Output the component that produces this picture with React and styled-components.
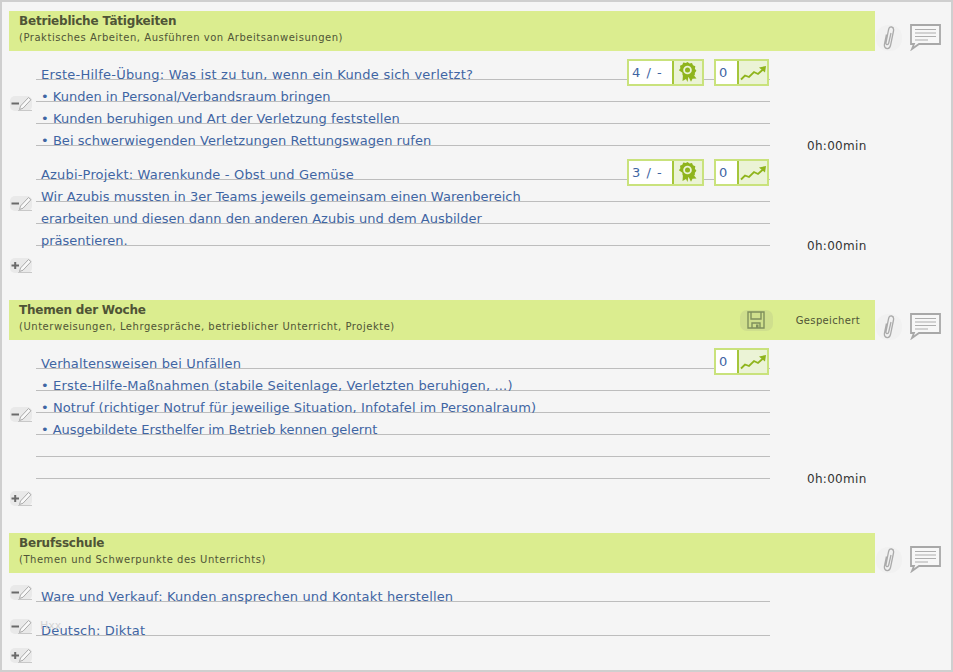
import React from 'react';
import styled, { createGlobalStyle } from 'styled-components';

const GlobalStyle = createGlobalStyle`
  html, body {
    margin: 0;
    padding: 0;
    background: #f5f5f5;
  }
  body {
    font-family: "DejaVu Sans", Verdana, sans-serif;
  }
`;

const Page = styled.div`
  box-sizing: border-box;
  width: 953px;
  height: 672px;
  overflow: hidden;
  padding: 9px 7px 0;
  border: 2px solid #cfcfcf;
  background: #f5f5f5;
`;

const Section = styled.section`
  margin-bottom: 27px;
`;

const HeaderRow = styled.div`
  display: flex;
  align-items: flex-start;
`;

const GreenBar = styled.header`
  box-sizing: border-box;
  display: flex;
  align-items: center;
  justify-content: space-between;
  width: 866px;
  height: 40px;
  padding: 0 15px 0 10px;
  background: #dbed8f;
`;

const TitleBlock = styled.div`
  align-self: flex-start;
  padding-top: 2px;
`;

const Title = styled.h2`
  margin: 0;
  font-size: 12px;
  line-height: 16px;
  font-weight: bold;
  letter-spacing: -0.2px;
  color: #4f5436;
`;

const Subtitle = styled.p`
  margin: 0;
  font-size: 10px;
  line-height: 17px;
  letter-spacing: 0.53px;
  color: #4f5436;
`;

const SaveArea = styled.div`
  display: flex;
  align-items: center;
  gap: 23px;
`;

const SaveButton = styled.div`
  display: flex;
  align-items: center;
  justify-content: center;
  width: 33px;
  height: 21px;
  border-radius: 7px;
  background: #cfdf8d;
`;

const SavedLabel = styled.span`
  font-size: 10px;
  letter-spacing: 0.35px;
  color: #4f5436;
`;

const Tools = styled.div`
  display: flex;
  align-items: center;
  gap: 8px;
  padding: 13px 0 0 1px;
`;

const ClipWrap = styled.div`
  display: flex;
  align-items: center;
  justify-content: center;
  width: 26px;
  height: 26px;
  border-radius: 12px;
  background: #f1f1f1;
`;

const Entries = styled.div`
  display: flex;
  flex-direction: column;
  gap: 12px;
  padding: 7px 0 0 1px;
`;

const EditIcon = styled.div`
  flex: none;
  width: 22px;
  height: 15px;
  border-radius: 5px;
  background: #e9e9e9;
`;

const Entry = styled.div`
  display: flex;
  align-items: center;
  gap: 4px;

  & > ${EditIcon} {
    margin-top: 3px;
  }
`;

const Lines = styled.div`
  position: relative;
  width: 734px;
`;

const Line = styled.div`
  box-sizing: border-box;
  height: 22px;
  padding: 9px 0 0 5px;
  border-bottom: 1px solid #bdbdbd;
  font-size: 13px;
  line-height: 16px;
  white-space: nowrap;
  letter-spacing: ${p => p.$track || 0}px;
  color: #3f65a3;
`;

const Badges = styled.div`
  position: absolute;
  top: 1px;
  right: 1px;
  display: flex;
  gap: 10px;
`;

const Badge = styled.div`
  box-sizing: border-box;
  display: flex;
  height: 27px;
  border: 2px solid #c9e27c;
  background: #fff;
`;

const BadgeValue = styled.span`
  box-sizing: border-box;
  width: ${p => p.$width}px;
  padding-left: 3px;
  font-size: 13px;
  line-height: 23px;
  letter-spacing: 1px;
  color: #3f65a3;
`;

const BadgeIcon = styled.span`
  display: flex;
  align-items: center;
  justify-content: center;
  width: 28px;
  border-left: 2px solid #a5c63b;
  background: #ebf3d6;
`;

const Duration = styled.div`
  align-self: flex-end;
  margin: 0 0 -8px 33px;
  font-size: 12px;
  line-height: 15px;
  letter-spacing: 0.3px;
  color: #333;
`;

const Ghost = styled.span`
  position: absolute;
  top: 7px;
  left: 4px;
  font-size: 11px;
  line-height: 10px;
  color: #d4d4d4;
`;

const EditGlyph = ({ plus }) => (
  <EditIcon>
    <svg width="22" height="15" viewBox="0 0 22 15">
      <path d="M1.500 7.500h7.500" stroke="#6a6a6a" strokeWidth="2" />
      {plus && <path d="M5.200 4v7" stroke="#6a6a6a" strokeWidth="2" />}
      <path d="M10.500 10l8-8.500 2.500 2.200-8 8.500-3.500 1.300z" fill="#f9f9f9" stroke="#aaa" />
      <path d="M8 14.500h14" stroke="#c8c8c8" />
    </svg>
  </EditIcon>
);

const Clip = () => (
  <svg width="12" height="24" viewBox="0 0 12 24" fill="none" stroke="#aaa" strokeWidth="1.300">
    <path d="M3.500 8.500L1.500 18c-.5 2.600.6 4.200 2.400 4.500 1.900.3 3.200-1 3.700-3.300L10.500 5c.4-2.200-.3-3.700-1.900-4-1.500-.2-2.700.8-3.100 2.800L3 16.500c-.2 1.200.2 2 1 2.100.8.2 1.400-.4 1.700-1.600L8 7" />
  </svg>
);

const Comment = () => (
  <svg width="31" height="27" viewBox="0 0 31 27">
    <path d="M1 1h29v19H9l-7 5 2-5H1z" fill="#f7f7f7" stroke="#a8a8a8" strokeWidth="1.800" />
    <path d="M5 5.500h21M5 9h21M5 12.500h21M5 16h13" stroke="#aeaeae" strokeWidth="1.200" />
  </svg>
);

const Floppy = () => (
  <svg width="18" height="18" viewBox="0 0 18 18" fill="none" stroke="#7f8f5c" strokeWidth="1.400">
    <path d="M1 1h16v16H1z" />
    <path d="M4 1v7h10V1M5 17v-5h8v5" />
    <path d="M9 13.500h2.500V17H9z" fill="#7f8f5c" stroke="none" />
  </svg>
);

const Rosette = () => (
  <svg width="20" height="21" viewBox="0 0 20 21">
    <path d="M5 12l-.5 7 3.500-2 1.500 3 1-6zM14 11l4.500 5.500-4 .2-1.500 3-3-6z" fill="#8fb41c" />
    <path d="M9.500 0l2 1.500 2.500-.5 1 2.300 2.300 1-.4 2.500 1.500 2-1.500 2-.1 2.400-2.400.5-1.400 2-2.400-.8-2.300.8-1.400-2-2.400-.5-.1-2.400L.9 8.300l1.500-2L2 3.800l2.300-1 1-2.300 2.500.5z" fill="#8fb41c" />
    <circle cx="9.500" cy="8" r="4.300" fill="#ebf3d6" />
    <circle cx="9.500" cy="8" r="2.500" fill="#8fb41c" />
  </svg>
);

const Trend = () => (
  <svg width="27" height="18" viewBox="0 0 27 18" fill="none">
    <path d="M1 15.500l4-4 4 1.500 5-5 4 2 5-4.500" stroke="#8fb41c" strokeWidth="1.800" />
    <path d="M19 3.500l7-1.500-1 6.500z" fill="#8fb41c" />
  </svg>
);

const sections = [
  {
    title: 'Betriebliche Tätigkeiten',
    subtitle: '(Praktisches Arbeiten, Ausführen von Arbeitsanweisungen)',
    entries: [
      {
        lines: [
          ['Erste-Hilfe-Übung: Was ist zu tun, wenn ein Kunde sich verletzt?', 0.23],
          ['• Kunden in Personal/Verbandsraum bringen', 0],
          ['• Kunden beruhigen und Art der Verletzung feststellen', 0.08],
          ['• Bei schwerwiegenden Verletzungen Rettungswagen rufen', 0.05],
        ],
        grade: '4 / -',
        count: '0',
        duration: '0h:00min',
      },
      {
        lines: [
          ['Azubi-Projekt: Warenkunde - Obst und Gemüse', 0.18],
          ['Wir Azubis mussten in 3er Teams jeweils gemeinsam einen Warenbereich', 0.03],
          ['erarbeiten und diesen dann den anderen Azubis und dem Ausbilder', 0],
          ['präsentieren.', 0],
        ],
        grade: '3 / -',
        count: '0',
        duration: '0h:00min',
      },
    ],
  },
  {
    title: 'Themen der Woche',
    subtitle: '(Unterweisungen, Lehrgespräche, betrieblicher Unterricht, Projekte)',
    saved: true,
    entries: [
      {
        lines: [
          ['Verhaltensweisen bei Unfällen', 0.14],
          ['• Erste-Hilfe-Maßnahmen (stabile Seitenlage, Verletzten beruhigen, ...)', 0.15],
          ['• Notruf (richtiger Notruf für jeweilige Situation, Infotafel im Personalraum)', 0.08],
          ['• Ausgebildete Ersthelfer im Betrieb kennen gelernt', -0.04],
          ['', 0],
          ['', 0],
        ],
        count: '0',
        duration: '0h:00min',
      },
    ],
  },
  {
    title: 'Berufsschule',
    subtitle: '(Themen und Schwerpunkte des Unterrichts)',
    entries: [
      { lines: [['Ware und Verkauf: Kunden ansprechen und Kontakt herstellen', 0.14]] },
      { lines: [['Deutsch: Diktat', 0.2]], ghost: 'Hxx' },
    ],
  },
];

export default function App() {
  return (
    <Page>
      <GlobalStyle />
      {sections.map(section => (
        <Section key={section.title}>
          <HeaderRow>
            <GreenBar>
              <TitleBlock>
                <Title>{section.title}</Title>
                <Subtitle>{section.subtitle}</Subtitle>
              </TitleBlock>
              {section.saved && (
                <SaveArea>
                  <SaveButton><Floppy /></SaveButton>
                  <SavedLabel>Gespeichert</SavedLabel>
                </SaveArea>
              )}
            </GreenBar>
            <Tools>
              <ClipWrap><Clip /></ClipWrap>
              <Comment />
            </Tools>
          </HeaderRow>
          <Entries>
            {section.entries.map(entry => (
              <Entry key={entry.lines[0][0]}>
                <EditGlyph />
                <Lines>
                  {entry.lines.map(([text, track], i) => <Line key={i} $track={track}>{text}</Line>)}
                  {entry.ghost && <Ghost>{entry.ghost}</Ghost>}
                  {entry.count && (
                    <Badges>
                      {entry.grade && (
                        <Badge>
                          <BadgeValue $width={43}>{entry.grade}</BadgeValue>
                          <BadgeIcon><Rosette /></BadgeIcon>
                        </Badge>
                      )}
                      <Badge>
                        <BadgeValue $width={21}>{entry.count}</BadgeValue>
                        <BadgeIcon><Trend /></BadgeIcon>
                      </Badge>
                    </Badges>
                  )}
                </Lines>
                {entry.duration && <Duration>{entry.duration}</Duration>}
              </Entry>
            ))}
            <EditGlyph plus />
          </Entries>
        </Section>
      ))}
    </Page>
  );
}
